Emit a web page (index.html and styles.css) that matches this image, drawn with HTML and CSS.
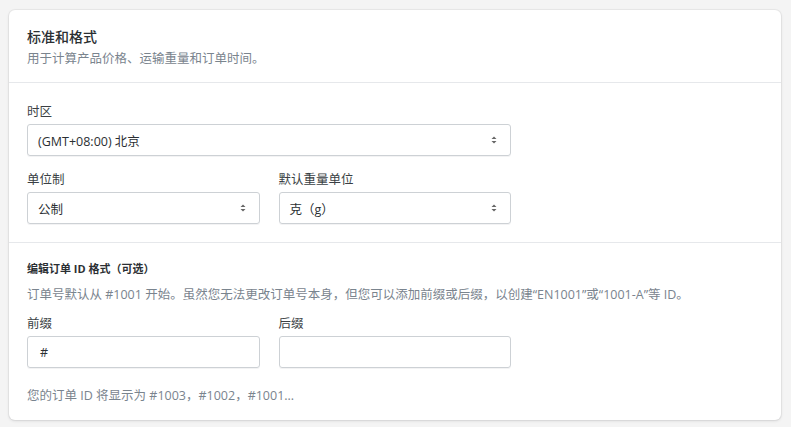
FILE: index.html
```html
<!DOCTYPE html>
<html lang="zh-CN">
<head>
    <meta charset="UTF-8">
    <title>标准和格式</title>
    <link rel="stylesheet" href="styles.css">
</head>
<body>
    <div class="card">
        <div class="card-section header">
            <h2>标准和格式</h2>
            <p class="muted">用于计算产品价格、运输重量和订单时间。</p>
        </div>

        <div class="card-section">
            <div class="field wide">
                <label>时区</label>
                <div class="select">
                    <span>(GMT+08:00) 北京</span>
                    <svg class="arrows" width="8" height="10" viewBox="0 0 8 10"><path d="M4 1.5 L6.5 4 H1.5 Z M4 8.5 L1.5 6 H6.5 Z" fill="#666"/></svg>
                </div>
            </div>
            <div class="row">
                <div class="field">
                    <label>单位制</label>
                    <div class="select">
                        <span>公制</span>
                        <svg class="arrows" width="8" height="10" viewBox="0 0 8 10"><path d="M4 1.5 L6.5 4 H1.5 Z M4 8.5 L1.5 6 H6.5 Z" fill="#666"/></svg>
                    </div>
                </div>
                <div class="field">
                    <label>默认重量单位</label>
                    <div class="select">
                        <span>克（g）</span>
                        <svg class="arrows" width="8" height="10" viewBox="0 0 8 10"><path d="M4 1.5 L6.5 4 H1.5 Z M4 8.5 L1.5 6 H6.5 Z" fill="#666"/></svg>
                    </div>
                </div>
            </div>
        </div>

        <div class="card-section order">
            <h3>编辑订单 ID 格式（可选）</h3>
            <p class="muted">订单号默认从 #1001 开始。虽然您无法更改订单号本身，但您可以添加前缀或后缀，以创建“EN1001”或“1001-A”等 ID。</p>
            <div class="row">
                <div class="field">
                    <label>前缀</label>
                    <div class="input">#</div>
                </div>
                <div class="field">
                    <label>后缀</label>
                    <div class="input"></div>
                </div>
            </div>
            <p class="muted help">您的订单 ID 将显示为 #1003，#1002，#1001...</p>
        </div>
    </div>
</body>
</html>
```

FILE: styles.css
```css
body {
    margin: 0;
    padding: 10px 10px 8px 9px;
    background: #f4f4f4;
    font-family: "Open Sans", "Noto Sans CJK SC", sans-serif;
    color: #2b2f33;
}

.card {
    background: #fff;
    border-radius: 6px;
    box-shadow: 0 0 0 1px rgba(63,63,68,0.05), 0 1px 3px 0 rgba(63,63,68,0.15);
}

.card-section {
    padding: 20px 18px 18px 18px;
    border-top: 1px solid #e6e8eb;
}

.card-section:first-child {
    border-top: none;
}

.header {
    padding-top: 17px;
    padding-bottom: 14px;
}

.order {
    padding-top: 18px;
    padding-bottom: 15px;
}

h2 {
    margin: 0 0 3px;
    font-size: 14px;
    font-weight: 500;
    line-height: 20px;
}

h3 {
    margin: 0 0 9px;
    font-size: 11px;
    font-weight: 700;
    line-height: 16px;
}

.muted {
    margin: 0;
    font-size: 12.5px;
    line-height: 18px;
    color: #7a848e;
}

.field {
    width: 484px;
}

.field label {
    display: block;
    font-size: 12.5px;
    font-weight: 400;
    line-height: 18px;
    margin-bottom: 3px;
    color: #3a3f44;
}

.row {
    display: flex;
    gap: 19px;
    width: 484px;
    margin-top: 15px;
}

.row .field {
    flex: 1;
}

.order .row {
    margin-top: 11px;
}

.select,
.input {
    height: 30px;
    border: 1px solid #cdd1d5;
    border-radius: 3px;
    box-shadow: 0 1px 0 rgba(22,29,37,0.05);
    display: flex;
    align-items: center;
    padding: 0 12px 0 10px;
    font-size: 12.5px;
}

.select span {
    flex: 1;
}

.input {
    padding-left: 12px;
}

.help {
    margin-top: 19px;
}
```
